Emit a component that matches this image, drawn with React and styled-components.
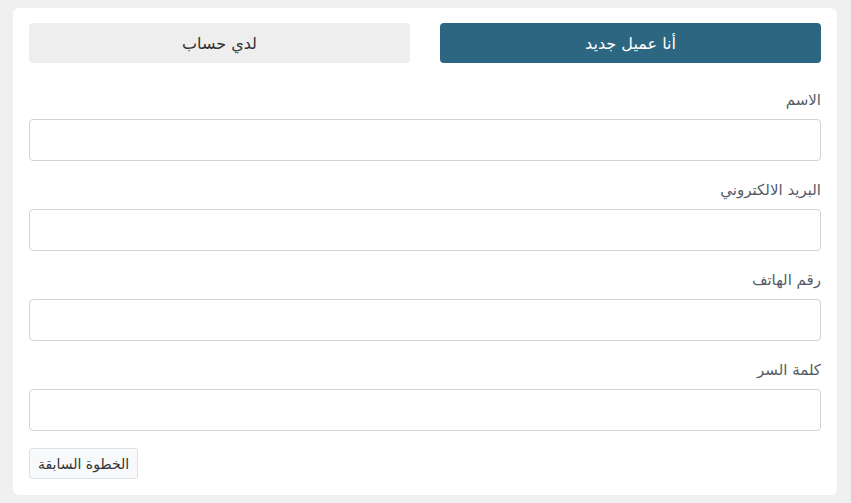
import React from "react";
import styled, { createGlobalStyle } from "styled-components";

const GlobalStyle = createGlobalStyle`
  *{
    margin:0;
    padding:0;
    box-sizing:border-box;
  }
  body{
    background:#f0f0f0;
    font-family: "DejaVu Sans", "Noto Sans", sans-serif;
  }
`;

const Page = styled.div`
  padding: 8px 14px 10px 13px;
  direction: rtl;
`;

const Card = styled.div`
  background: #fff;
  border-radius: 6px;
  padding: 15px 16px 16px;
`;

const Tabs = styled.div`
  display: grid;
  grid-template-columns: 1fr 1fr;
  gap: 30px;
  margin-bottom: 27px;
`;

const Tab = styled.button`
  height: 40px;
  border: none;
  border-radius: 4px;
  font-family: inherit;
  font-size: 16px;
  background: ${(p) => (p.$active ? "#2c6680" : "#eeeeee")};
  color: ${(p) => (p.$active ? "#ffffff" : "#333333")};
`;

const Group = styled.div`
  margin-bottom: 19px;
`;

const Label = styled.label`
  display: block;
  font-size: 15px;
  line-height: 21px;
  color: #555b66;
  margin-bottom: 8px;
`;

const Input = styled.input`
  display: block;
  width: 100%;
  height: 42px;
  border: 1px solid #ced4da;
  border-radius: 4px;
  background: #fff;
`;

const BackRow = styled.div`
  display: flex;
  justify-content: flex-end;
  margin-top: -2px;
`;

const BackButton = styled.button`
  height: 31px;
  padding: 0 8px;
  border: 1px solid #dee2e6;
  border-radius: 3px;
  background: #f8f9fa;
  color: #333;
  font-family: inherit;
  font-size: 14px;
`;

const fields = ["الاسم", "البريد الالكتروني", "رقم الهاتف", "كلمة السر"];

function App() {
  return (
    <Page>
      <GlobalStyle />
      <Card>
        <Tabs>
          <Tab $active>أنا عميل جديد</Tab>
          <Tab>لدي حساب</Tab>
        </Tabs>
        {fields.map((f) => (
          <Group key={f}>
            <Label>{f}</Label>
            <Input type={f === "كلمة السر" ? "password" : "text"} />
          </Group>
        ))}
        <BackRow>
          <BackButton>الخطوة السابقة</BackButton>
        </BackRow>
      </Card>
    </Page>
  );
}

export default App;
